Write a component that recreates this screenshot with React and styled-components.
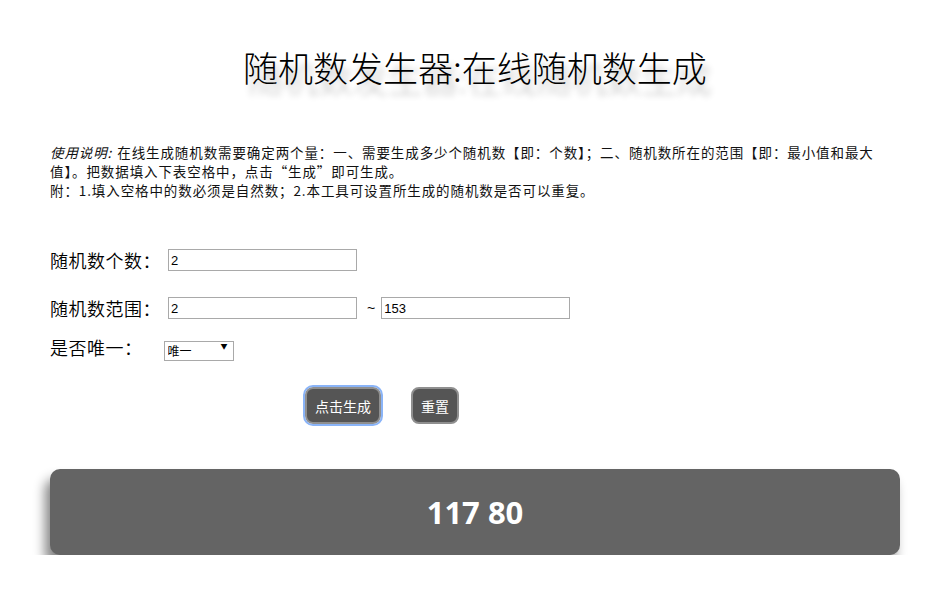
import React, { useState } from "react";
import styled, { createGlobalStyle } from "styled-components";

const Global = createGlobalStyle`
  html, body { margin: 0; padding: 0; background: #fff; }
  body {
    font-family: "Noto Sans CJK SC", "Noto Sans", sans-serif;
    color: #000;
  }
`;

const Page = styled.main`
  width: 850px;
  padding: 0 25px 0 50px;
`;

const Title = styled.h1`
  margin: 0;
  padding-top: 44px;
  height: 95px;
  box-sizing: border-box;
  text-align: center;
  font-size: 35px;
  font-weight: 300;
  line-height: 46px;
  letter-spacing: 0;
  text-shadow: 5px 11px 6px #c4c4c4;
`;

const Notes = styled.section`
  margin-top: 48px;
  font-size: 13.5px;
  line-height: 19px;
  letter-spacing: 0.9px;
  color: #111;
`;

const Em = styled.em`
  font-style: italic;
  margin-right: 5px;
`;

const Form = styled.form`
  margin-top: 47px;
  display: flex;
  flex-direction: column;
`;

const Row = styled.div`
  display: flex;
  align-items: center;
  height: 26px;
  margin-top: ${(p) => p.$top || 0}px;
`;

const Label = styled.label`
  font-size: 18px;
  font-weight: 350;
  line-height: 26px;
  letter-spacing: 0.5px;
  margin-right: ${(p) => p.$gap}px;
  white-space: nowrap;
`;

const Field = styled.input`
  box-sizing: border-box;
  width: 189px;
  height: 22px;
  padding: 1px 2px;
  border: 1px solid #a9a9a9;
  font-family: "Liberation Sans", Arial, sans-serif;
  font-size: 13px;
  color: #000;
  outline: none;
`;

const Tilde = styled.span`
  font-family: "Liberation Sans", Arial, sans-serif;
  font-size: 14px;
  margin: 0 6px 0 10px;
`;

const SelectWrap = styled.span`
  position: relative;
  display: inline-block;
  height: 20px;
`;

const Select = styled.select`
  appearance: none;
  box-sizing: border-box;
  width: 70px;
  height: 20px;
  padding: 0 3px;
  border: 1px solid #a9a9a9;
  border-radius: 0;
  background: #fff;
  font-family: "Noto Sans CJK SC", sans-serif;
  font-size: 12px;
  line-height: 18px;
  color: #000;
`;

const Caret = styled.span`
  position: absolute;
  right: 6px;
  top: 5px;
  font-size: 7px;
  line-height: 9px;
  pointer-events: none;
  color: #000;
`;

const Actions = styled.div`
  display: flex;
  gap: 30px;
  padding-left: 255px;
  margin-top: 27px;
`;

const Btn = styled.button`
  box-sizing: border-box;
  height: 37px;
  padding: 0 8px;
  border: 2px solid #8f8f8f;
  border-radius: 8px;
  background: #555;
  color: #fff;
  font-family: "Noto Sans CJK SC", sans-serif;
  font-size: 14px;
  cursor: pointer;
  outline: ${(p) => (p.$focused ? "2px solid #8ab4f8" : "none")};
  outline-offset: 0;
`;

const Result = styled.output`
  display: flex;
  align-items: center;
  justify-content: center;
  height: 86px;
  margin-top: 45px;
  border-radius: 10px;
  background: #646464;
  box-shadow: -5px 10px 12px #858585;
  color: #fff;
  font-family: "Open Sans", "Liberation Sans", sans-serif;
  font-weight: 700;
  font-size: 31px;
`;

export default function App() {
  const [count, setCount] = useState("2");
  const [min, setMin] = useState("2");
  const [max, setMax] = useState("153");
  const [unique, setUnique] = useState("1");
  const [result, setResult] = useState("117 80");

  const generate = () => {
    const n = parseInt(count, 10) || 0;
    const lo = parseInt(min, 10) || 0;
    const hi = parseInt(max, 10) || 0;
    const out = [];
    let guard = 0;
    while (out.length < n && guard < 10000) {
      guard++;
      const v = lo + Math.floor(Math.random() * (hi - lo + 1));
      if (unique === "1" && out.includes(v)) continue;
      out.push(v);
    }
    setResult(out.join(" "));
  };

  const reset = () => {
    setCount("");
    setMin("");
    setMax("");
    setResult("");
  };

  return (
    <>
      <Global />
      <Page>
        <Title>随机数发生器:在线随机数生成</Title>
        <Notes>
          <Em>使用说明:</Em>在线生成随机数需要确定两个量：一、需要生成多少个随机数【即：个数】；二、随机数所在的范围【即：最小值和最大值】。把数据填入下表空格中，点击“生成”即可生成。
          <br />
          附：1.填入空格中的数必须是自然数；2.本工具可设置所生成的随机数是否可以重复。
        </Notes>
        <Form onSubmit={(e) => e.preventDefault()}>
          <Row>
            <Label $gap={7}>随机数个数：</Label>
            <Field value={count} onChange={(e) => setCount(e.target.value)} />
          </Row>
          <Row $top={22}>
            <Label $gap={7}>随机数范围：</Label>
            <Field value={min} onChange={(e) => setMin(e.target.value)} />
            <Tilde>~</Tilde>
            <Field value={max} onChange={(e) => setMax(e.target.value)} />
          </Row>
          <Row $top={13}>
            <Label $gap={21}>是否唯一：</Label>
            <SelectWrap>
              <Select value={unique} onChange={(e) => setUnique(e.target.value)}>
                <option value="1">唯一</option>
                <option value="0">可重复</option>
              </Select>
              <Caret>▼</Caret>
            </SelectWrap>
          </Row>
          <Actions>
            <Btn type="button" $focused onClick={generate}>点击生成</Btn>
            <Btn type="button" onClick={reset}>重置</Btn>
          </Actions>
        </Form>
        <Result>{result}</Result>
      </Page>
    </>
  );
}
